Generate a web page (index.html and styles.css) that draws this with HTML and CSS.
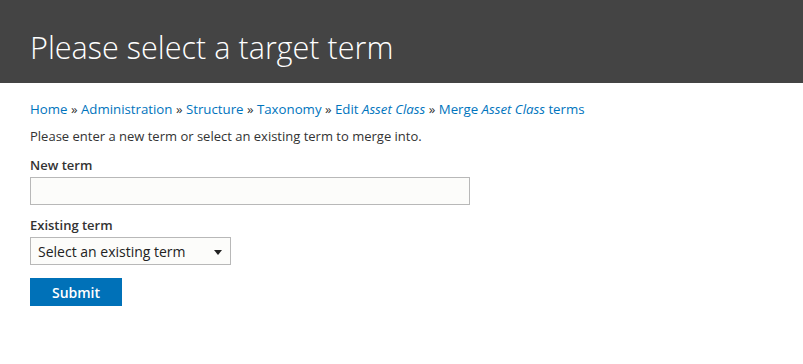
FILE: index.html
```html
<!DOCTYPE html>
<html lang="en">
<head>
    <meta charset="UTF-8">
    <meta name="viewport" content="width=device-width, initial-scale=1.0">
    <title>Please select a target term</title>
    <link rel="stylesheet" href="styles.css">
</head>
<body>
    <header class="page-header">
        <h1>Please select a target term</h1>
    </header>

    <main class="content">
        <nav class="breadcrumb">
            <a href="#">Home</a> &raquo;
            <a href="#">Administration</a> &raquo;
            <a href="#">Structure</a> &raquo;
            <a href="#">Taxonomy</a> &raquo;
            <a href="#">Edit <em>Asset Class</em></a> &raquo;
            <a href="#">Merge <em>Asset Class</em> terms</a>
        </nav>

        <p class="intro">Please enter a new term or select an existing term to merge into.</p>

        <form class="merge-form">
            <div class="form-item">
                <label for="newTerm">New term</label>
                <input type="text" id="newTerm" class="text-input">
            </div>

            <div class="form-item">
                <label for="existingTerm">Existing term</label>
                <div class="select-wrap">
                    <select id="existingTerm">
                        <option>Select an existing term</option>
                    </select>
                </div>
            </div>

            <button type="submit" class="submit-btn">Submit</button>
        </form>
    </main>
</body>
</html>
```

FILE: styles.css
```css
body {
    margin: 0;
    font-family: 'Open Sans', 'Noto Sans', sans-serif;
    color: #333;
    background: #fff;
}
.page-header {
    box-sizing: border-box;
    background: #444;
    height: 83px;
    padding: 32px 30px 0;
}
.page-header h1 {
    margin: 0;
    font-family: 'Open Sans Light', 'Open Sans', sans-serif;
    font-size: 30.6px;
    line-height: 31px;
    font-weight: 300;
    color: #fff;
}
.content {
    padding: 16px 30px;
}
.breadcrumb {
    font-size: 13.25px;
    line-height: 20px;
    color: #333;
}
.breadcrumb a {
    color: #0074bd;
    text-decoration: none;
}
.intro {
    margin: 7px 0 9px;
    font-size: 13px;
    line-height: 20px;
    color: #333;
}
.form-item {
    margin-bottom: 10px;
}
.form-item label {
    display: block;
    font-size: 13px;
    font-weight: 600;
    line-height: 20px;
    color: #333;
    margin-bottom: 2px;
}
.text-input {
    display: block;
    box-sizing: border-box;
    width: 440px;
    height: 28px;
    margin: 0;
    border: 1px solid #b8b8b8;
    border-radius: 0;
    background: #fcfcfa;
    font-family: inherit;
    font-size: 14px;
    padding: 4px 8px;
}
.select-wrap {
    position: relative;
    width: 201px;
}
.select-wrap select {
    display: block;
    box-sizing: border-box;
    width: 201px;
    height: 28px;
    margin: 0;
    padding: 0 24px 0 7px;
    border: 1px solid #b8b8b8;
    border-radius: 0;
    background: #fcfcfa;
    font-family: inherit;
    font-size: 14px;
    color: #222;
    appearance: none;
    -webkit-appearance: none;
}
/* small down arrow drawn over the select */
.select-wrap::after {
    content: '';
    position: absolute;
    right: 9px;
    top: 13px;
    border-left: 4.5px solid transparent;
    border-right: 4.5px solid transparent;
    border-top: 5px solid #222;
    pointer-events: none;
}
.submit-btn {
    display: block;
    margin-top: 13px;
    width: 92px;
    height: 28px;
    padding: 0;
    border: none;
    border-radius: 0;
    background: #0071b8;
    color: #fff;
    font-family: inherit;
    font-size: 14px;
    font-weight: 600;
    cursor: pointer;
}
```
